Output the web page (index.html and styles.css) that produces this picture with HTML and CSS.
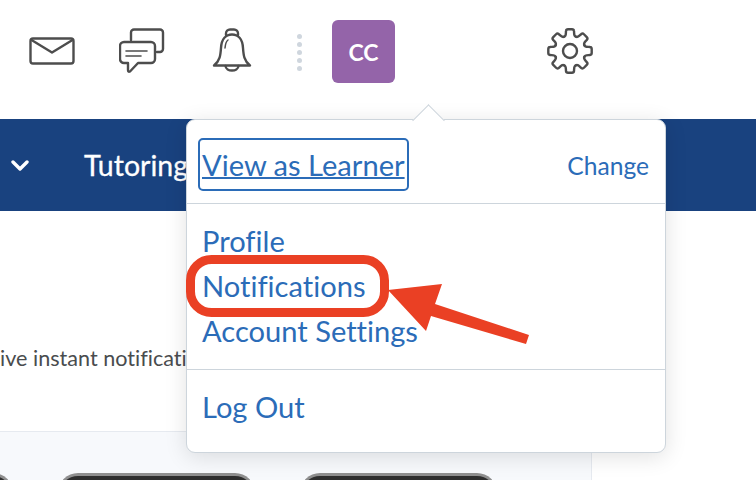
FILE: index.html
```html
<!DOCTYPE html>
<html lang="en">
<head>
  <meta charset="UTF-8" />
  <title>Notifications</title>
  <link rel="stylesheet" href="styles.css">
</head>
<body>
  <div class="page">
    <header class="topbar">
      <svg class="icon icon-mail" viewBox="0 0 46 28" fill="none" stroke="#4d4d4d" stroke-width="2.4" stroke-linejoin="round" stroke-linecap="round">
        <rect x="1.5" y="1.5" width="43" height="25" rx="2.5"/>
        <path d="M2.5 3 L23 15.5 L43.5 3"/>
      </svg>
      <svg class="icon icon-chat" viewBox="0 0 46 46" fill="none" stroke="#4d4d4d" stroke-width="2.4" stroke-linejoin="round" stroke-linecap="round">
        <path d="M12 12 V4.500 a3 3 0 0 1 3 -3 H41 a3 3 0 0 1 3 3 V21 a3 3 0 0 1 -3 3 H38"/>
        <path d="M5 14 H32 a4 4 0 0 1 4 4 V31 a4 4 0 0 1 -4 4 H19 L11 43.500 Q9 44.500 9 42 V35 H5 a4 4 0 0 1 -4 -4 V18 a4 4 0 0 1 4 -4 Z"/>
        <path d="M7 23 H28 M7 28 H22" stroke-width="1.600"/>
      </svg>
      <svg class="icon icon-bell" viewBox="0 0 40 46" fill="none" stroke="#4d4d4d" stroke-width="2.400" stroke-linejoin="round" stroke-linecap="round">
        <path d="M14 7 V5.500 a4 4 0 0 1 4 -4 h4 a4 4 0 0 1 4 4 V7"/>
        <path d="M2 37.500 C8 33 8.500 27 9 20 C9.500 11 14 6.500 20 6.500 C26 6.500 30.500 11 31 20 C31.500 27 32 33 38 37.500 Z"/>
        <path d="M13 20 C13.500 15 14.500 13 16 12" stroke-width="1.500"/>
        <path d="M13.500 38 C14 44 26 44 26.500 38"/>
      </svg>
      <div class="dots"><i></i><i></i><i></i><i></i><i></i></div>
      <div class="avatar">CC</div>
      <svg class="icon icon-gear" viewBox="0 0 46 46" fill="none" stroke="#4d4d4d" stroke-width="2.400" stroke-linecap="round" stroke-linejoin="round">
        <defs>
          <path id="tooth" d="M17.070 8.680 C19.500 8 18.700 5 19 3 Q19.200 1.300 21 1.300 H25 Q26.800 1.300 27 3 C27.300 5 26.500 8 28.930 8.680"/>
        </defs>
        <circle cx="23" cy="23" r="7"/>
        <use href="#tooth"/>
        <use href="#tooth" transform="rotate(45 23 23)"/>
        <use href="#tooth" transform="rotate(90 23 23)"/>
        <use href="#tooth" transform="rotate(135 23 23)"/>
        <use href="#tooth" transform="rotate(180 23 23)"/>
        <use href="#tooth" transform="rotate(225 23 23)"/>
        <use href="#tooth" transform="rotate(270 23 23)"/>
        <use href="#tooth" transform="rotate(315 23 23)"/>
      </svg>
    </header>

    <nav class="navband">
      <svg class="chevron" viewBox="0 0 18 11" fill="none" stroke="#fff" stroke-width="3.400" stroke-linecap="round" stroke-linejoin="round">
        <path d="M2 2 L9 9 L16 2"/>
      </svg>
      <span class="nav-item">Tutoring</span>
    </nav>

    <main class="content">
      <p class="lead">ive instant notifications</p>
      <section class="panel">
        <div class="phone phone-first"></div>
        <div class="phone"></div>
        <div class="phone"></div>
      </section>
    </main>

    <div class="menu">
      <div class="menu-head">
        <a class="focus-link">View as Learner</a>
        <a class="change">Change</a>
      </div>
      <div class="menu-links">
        <a>Profile</a>
        <a>Notifications</a>
        <a>Account Settings</a>
      </div>
      <div class="menu-foot">
        <a>Log Out</a>
      </div>
    </div>

    <svg class="markup" viewBox="0 0 756 480" fill="none">
      <rect x="190.500" y="259.500" width="194" height="53" rx="21" stroke="#ea4024" stroke-width="9"/>
      <path d="M388 290 L442 284 L435 304 L529 335 L526 344 L431 316 L426 331 Z" fill="#ea4024"/>
    </svg>
  </div>
</body>
</html>
```

FILE: styles.css
```css
* { box-sizing: border-box; margin: 0; padding: 0; }
html, body { width: 756px; height: 480px; overflow: hidden; background: #fff; }
body { font-family: Lato, sans-serif; color: #494c4e; font-variant-ligatures: none; }

.page { position: relative; width: 756px; height: 480px; overflow: hidden; }

.topbar { display: flex; align-items: flex-start; height: 119px; position: relative; }
.icon { display: block; flex: none; }
.icon-mail { width: 46px; height: 28px; margin: 37px 0 0 29px; }
.icon-chat { width: 46px; height: 46px; margin: 28px 0 0 44px; }
.icon-bell { width: 40px; height: 46px; margin: 28px 0 0 47px; }
.dots { display: flex; flex-direction: column; gap: 3px; margin: 34px 0 0 45px; }
.dots i { display: block; width: 5px; height: 5px; border-radius: 50%; background: #cfd6de; }
.avatar {
  width: 63px; height: 63px; margin: 20px 0 0 30px;
  background: #9464a9; border-radius: 6px; color: #fff;
  font-size: 23px; font-weight: 700;
  display: flex; align-items: center; justify-content: center;
}
.icon-gear { width: 46px; height: 46px; margin: 28px 0 0 152px; }

.navband { display: flex; align-items: center; height: 92px; background: #19427f; color: #fff; }
.chevron { width: 18px; height: 11px; margin-left: 11px; }
.nav-item { font-size: 28.5px; margin-left: 55px; -webkit-text-stroke: 0.3px #fff; }

.content { height: 269px; display: flex; flex-direction: column; }
.lead { font-size: 21.6px; line-height: 24px; margin-top: 135px; white-space: nowrap; }
.panel {
  margin-top: 61px; width: 592px; flex: 1;
  background: #f7f9fc; border-top: 1px solid #e6eaf0; border-right: 1px solid #e6eaf0;
  display: flex; gap: 45px; padding: 41px 0 0 0;
}
.phone {
  flex: none; width: 197px; height: 60px;
  background: #2e2e2e; border-top: 3px solid #8f8f8f; border-left: 2px solid #777; border-right: 2px solid #777;
  border-radius: 20px 20px 0 0;
}
.phone-first { margin-left: -184px; }

.menu {
  position: absolute; left: 186px; top: 119px; width: 480px; height: 334px;
  background: #fff; border: 1px solid #cdd5dc; border-radius: 9px;
  box-shadow: 0 4px 22px rgba(0, 0, 0, 0.12);
  font-size: 29.1px; color: #2b6cb8;
  display: flex; flex-direction: column;
}
.menu::before {
  content: ""; position: absolute; left: 230px; top: -11px; width: 22px; height: 22px;
  background: #fff; border-left: 1px solid #cdd5dc; border-top: 1px solid #cdd5dc;
  transform: rotate(45deg);
}
.menu-head {
  display: flex; align-items: center; justify-content: space-between;
  height: 84px; padding: 6px 16px 0 11px; border-bottom: 1px solid #cdd5dc;
  position: relative;
}
.focus-link {
  border: 2.5px solid #2b6cb8; border-radius: 5px; padding: 0 2px; height: 53px;
  line-height: 50px; text-decoration: underline; text-decoration-thickness: 2px;
  display: block;
}
.change { font-size: 24.6px; margin-top: 2px; }
.menu-links { display: flex; flex-direction: column; height: 166px; padding: 14px 0 0 15px; border-bottom: 1px solid #cdd5dc; }
.menu-links a { line-height: 45px; }
.menu-foot { padding: 14px 0 0 15px; line-height: 45px; }

.markup { position: absolute; left: 0; top: 0; width: 756px; height: 480px; pointer-events: none; }
```
